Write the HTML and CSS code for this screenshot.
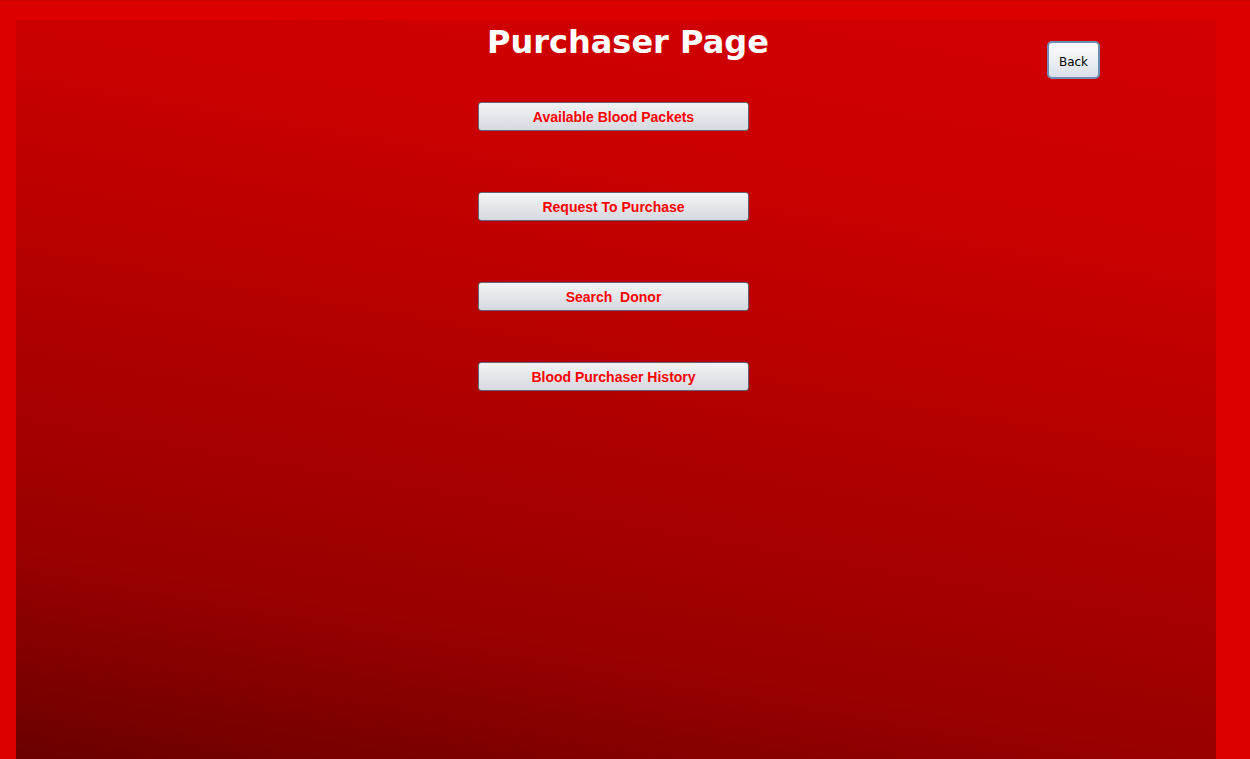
FILE: index.html
```html
<!DOCTYPE html>
<html>
<head>
<meta charset="utf-8">
<link rel="stylesheet" href="styles.css">
</head>
<body>
<div class="frame">
  <div class="panel">
    <div class="header">
      <h1 class="title">Purchaser Page</h1>
      <button class="back">Back</button>
    </div>
    <div class="menu">
      <button class="menu-btn first">Available Blood Packets</button>
      <button class="menu-btn">Request To Purchase</button>
      <button class="menu-btn">Search&nbsp; Donor</button>
      <button class="menu-btn last">Blood Purchaser History</button>
    </div>
  </div>
</div>
</body>
</html>
```
FILE: styles.css
```css
html, body {
  margin: 0;
  padding: 0;
  height: 100%;
  overflow: hidden;
}
.frame {
  box-sizing: border-box;
  height: 759px;
  background: #dd0000;
  border-top: 1px solid #c40000;
  padding: 19px 34px 0 16px;
  display: flex;
}
.panel {
  flex: 1;
  background: linear-gradient(190deg, #d20000 0%, #cc0000 22%, #990000 78%, #6a0000 100%);
  display: flex;
  flex-direction: column;
}
.header {
  display: flex;
  align-items: flex-start;
}
.title {
  margin: 2px 0 0 471px;
  font-family: "DejaVu Sans", sans-serif;
  font-weight: bold;
  font-size: 32px;
  line-height: 40px;
  color: #ffffff;
}
.back {
  margin: 21px 116px 0 auto;
  width: 53px;
  height: 38px;
  box-sizing: border-box;
  border: 2px solid #6d8fb5;
  border-radius: 5px;
  background: linear-gradient(#fbfcfd, #e9edf3 60%, #d9dfe9);
  font-family: "DejaVu Sans", sans-serif;
  font-size: 12px;
  color: #000;
  padding: 3px 0 0 0;
}
.menu {
  display: flex;
  flex-direction: column;
  align-items: flex-start;
  padding-left: 462px;
}
.menu-btn {
  width: 271px;
  height: 29px;
  box-sizing: border-box;
  border: 1px solid #5f6470;
  border-radius: 3px;
  background: linear-gradient(#f3f4f6, #e4e6ea 50%, #d6d9e0);
  font-family: "Liberation Sans", sans-serif;
  font-weight: bold;
  font-size: 14px;
  color: #ff0000;
  padding: 0;
  margin-top: 61px;
}
.menu-btn.first {
  margin-top: 23px;
}
.menu-btn.last {
  margin-top: 51px;
}
```
